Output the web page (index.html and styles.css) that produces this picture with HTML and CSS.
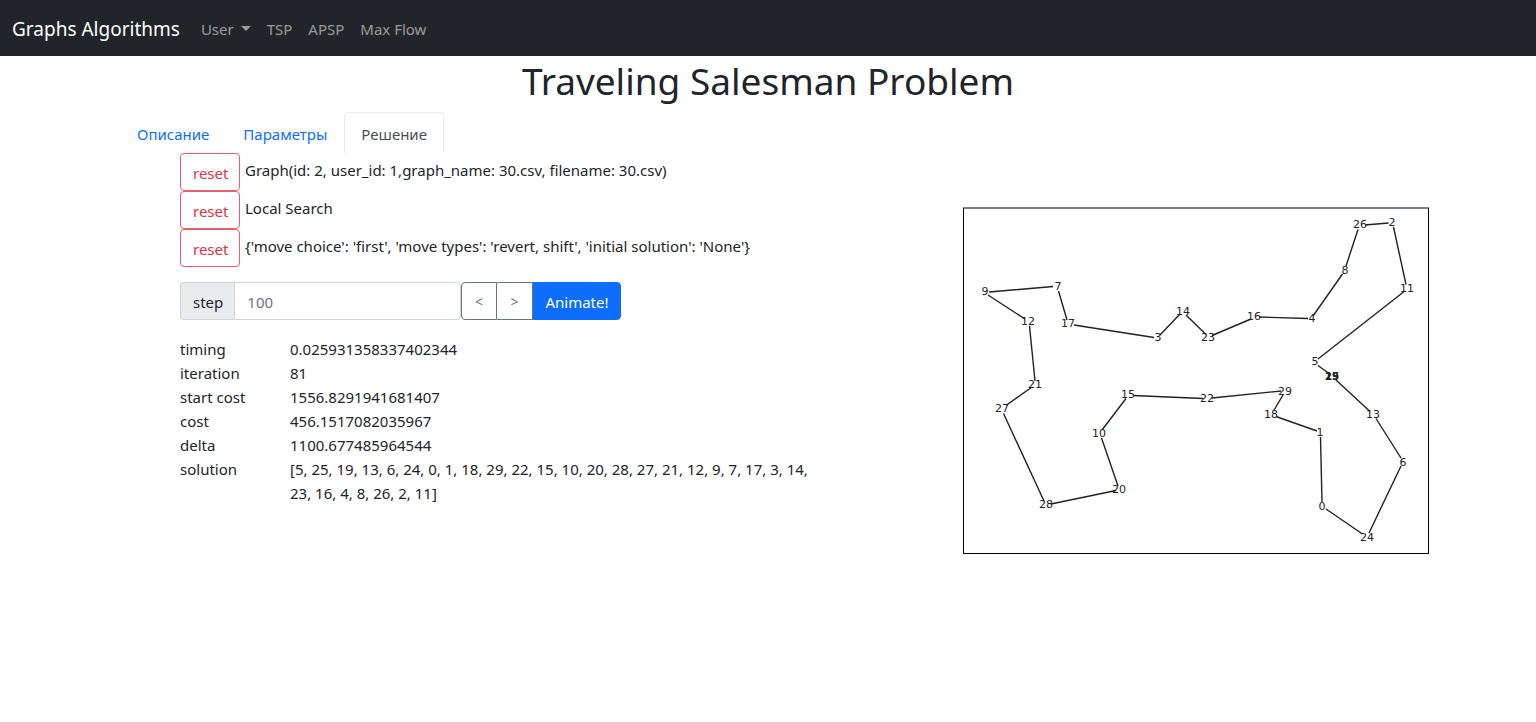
FILE: index.html
```html
<!DOCTYPE html>
<html lang="ru">
<head>
<meta charset="utf-8">
<title>Graphs Algorithms</title>
<link rel="stylesheet" href="styles.css">
</head>
<body>
<nav class="navbar">
  <a class="brand" href="#">Graphs Algorithms</a>
  <a class="nav-link dropdown" href="#">User</a>
  <a class="nav-link" href="#">TSP</a>
  <a class="nav-link" href="#">APSP</a>
  <a class="nav-link" href="#">Max Flow</a>
</nav>
<h1 class="title">Traveling Salesman Problem</h1>
<div class="tabs">
  <a class="tab" href="#">Описание</a>
  <a class="tab" href="#">Параметры</a>
  <a class="tab active" href="#">Решение</a>
</div>
<main class="content">
  <section>
    <div class="choice"><button class="btn reset" type="button">reset</button><span class="choice-text">Graph(id: 2, user_id: 1,graph_name: 30.csv, filename: 30.csv)</span></div>
    <div class="choice"><button class="btn reset" type="button">reset</button><span class="choice-text">Local Search</span></div>
    <div class="choice"><button class="btn reset" type="button">reset</button><span class="choice-text">{'move choice': 'first', 'move types': 'revert, shift', 'initial solution': 'None'}</span></div>
    <form class="controls">
      <label class="addon" for="step">step</label>
      <input class="step" id="step" type="text" placeholder="100">
      <button class="btn arrow prev" type="button">&lt;</button>
      <button class="btn arrow next" type="button">&gt;</button>
      <button class="btn animate" type="button">Animate!</button>
    </form>
    <table class="results">
      <tr><th scope="row">timing</th><td>0.025931358337402344</td></tr>
      <tr><th scope="row">iteration</th><td>81</td></tr>
      <tr><th scope="row">start cost</th><td>1556.8291941681407</td></tr>
      <tr><th scope="row">cost</th><td>456.1517082035967</td></tr>
      <tr><th scope="row">delta</th><td>1100.677485964544</td></tr>
      <tr><th scope="row">solution</th><td>[5, 25, 19, 13, 6, 24, 0, 1, 18, 29, 22, 15, 10, 20, 28, 27, 21, 12, 9, 7, 17, 3, 14, 23, 16, 4, 8, 26, 2, 11]</td></tr>
    </table>
  </section>
  <svg class="plot" viewBox="888 153 601 451" role="img" aria-label="Tour">
    <rect class="frame" x="963.5" y="208" width="465" height="345.5"/>
    <path class="edges" d="M989 292L1053 286.5M1058.5 291L1067 320M988 295L1025 319M1029.5 326L1035 381M1074 325L1154 337.5M1160 335L1180 314M1186 315L1206 334.5M1212 335.5L1251 319M1259 317L1308 318.5M1313 316L1342.5 274M1346 266L1358 229.5M1365 225L1388.5 223M1393.5 227L1406 284.5M1403.5 292L1318 359M1318 365.5L1329 373.5M1336 380L1370 411.5M1376 418.5L1401 458M1401 466L1369 533M1362.5 534L1326 509M1322 502L1320.5 437M1317 431L1276 416.5M1273.5 411L1283 395M1281 391L1212 398M1203 398.5L1133 395.5M1126 398.5L1102 430M1101.5 438L1118 486M1116 490.5L1051 504M1044 501L1003.5 413.5M1006 405.5L1032 387"/>
    <g class="nodes">
      <text x="985" y="295">9</text><text x="1058" y="290">7</text><text x="1068" y="327">17</text>
      <text x="1158" y="341">3</text><text x="1183" y="315">14</text><text x="1208" y="341">23</text>
      <text x="1254" y="320">16</text><text x="1312" y="322">4</text><text x="1345" y="274">8</text>
      <text x="1360" y="228">26</text><text x="1392" y="226">2</text><text x="1407" y="292">11</text>
      <text x="1315" y="365">5</text><text class="stacked" x="1332" y="380">25</text><text class="stacked" x="1332" y="380">19</text>
      <text x="1373" y="418">13</text><text x="1403" y="466">6</text><text x="1367" y="541">24</text>
      <text x="1322" y="510">0</text><text x="1320" y="436">1</text><text x="1271" y="418">18</text>
      <text x="1285" y="395">29</text><text x="1207" y="402">22</text><text x="1128" y="398">15</text>
      <text x="1099" y="437">10</text><text x="1119" y="493">20</text><text x="1046" y="508">28</text>
      <text x="1002" y="412">27</text><text x="1035" y="388">21</text><text x="1028" y="325">12</text>
    </g>
  </svg>
</main>
</body>
</html>
```
FILE: styles.css
```css
* { box-sizing: border-box; }
body {
  margin: 0;
  background: #fff;
  color: #212529;
  font: 15px/24px "Noto Sans", "Open Sans", sans-serif;
}
.navbar {
  display: flex;
  align-items: center;
  height: 56px;
  padding: 2px 12px 0;
  background: #212529;
}
.brand {
  margin-right: 13px;
  color: #fff;
  font-size: 19px;
  text-decoration: none;
}
.nav-link {
  padding: 8px;
  color: rgba(255, 255, 255, .55);
  text-decoration: none;
}
.dropdown::after {
  content: "";
  display: inline-block;
  margin-left: 7px;
  vertical-align: 4px;
  border: 5px solid transparent;
  border-top-color: currentColor;
  border-bottom: 0;
}
.title {
  margin: 0 0 6px;
  font-size: 37px;
  font-weight: 400;
  line-height: 50px;
  text-align: center;
}
.tabs {
  display: flex;
  width: 100%;
  max-width: 1296px;
  margin: 0 auto;
}
.tab {
  padding: 9px 16px 7px;
  border: 1px solid transparent;
  border-bottom: 0;
  color: #0d6efd;
  text-decoration: none;
}
.tab.active {
  border-color: #e9ecef;
  border-radius: 4px 4px 0 0;
  color: #495057;
}
.content {
  display: grid;
  grid-template-columns: minmax(0, 708fr) minmax(0, 601fr);
  align-items: start;
  padding: 0 47px 0 180px;
}
.choice {
  display: flex;
  align-items: flex-start;
  gap: 5px;
}
.choice-text { padding-top: 5px; }
.btn {
  height: 38px;
  padding: 2px 12px 0;
  border: 1px solid;
  border-radius: 4px;
  background: #fff;
  font: inherit;
}
.reset {
  width: 60px;
  border-color: #e4606d;
  color: #dc3545;
}
.controls {
  display: flex;
  width: 441px;
  max-width: 100%;
  margin: 15px 0 17px;
}
.addon {
  padding: 7px 11px 5px 12px;
  border: 1px solid #ced4da;
  border-right: 0;
  border-radius: 4px 0 0 4px;
  background: #e9ecef;
}
.step {
  flex: 1;
  min-width: 0;
  padding: 2px 12px 0;
  border: 1px solid #ced4da;
  border-radius: 0 4px 4px 0;
  color: #212529;
  font: inherit;
}
.step::placeholder { color: #6c757d; }
.arrow {
  width: 36px;
  border-color: #6c757d;
  color: #6c757d;
  font-size: 14px;
}
.prev { border-radius: 4px 0 0 4px; }
.next {
  border-left: 0;
  border-radius: 0;
}
.animate {
  width: 88px;
  padding: 2px 0 0;
  border-color: #0d6efd;
  border-radius: 0 4px 4px 0;
  background: #0d6efd;
  color: #fff;
}
.results {
  width: 100%;
  max-width: 640px;
  border-collapse: collapse;
}
.results th,
.results td {
  padding: 0;
  font-weight: 400;
  text-align: left;
  vertical-align: top;
}
.results th { width: 110px; }
.plot {
  display: block;
  width: 100%;
  height: auto;
}
.frame {
  fill: none;
  stroke: #000;
}
.edges {
  fill: none;
  stroke: #222;
  stroke-width: 1.4;
}
.nodes {
  fill: #222;
  font: 11px "DejaVu Sans", sans-serif;
  text-anchor: middle;
}
.stacked { font-weight: 700; font-size: 10px; }
```
